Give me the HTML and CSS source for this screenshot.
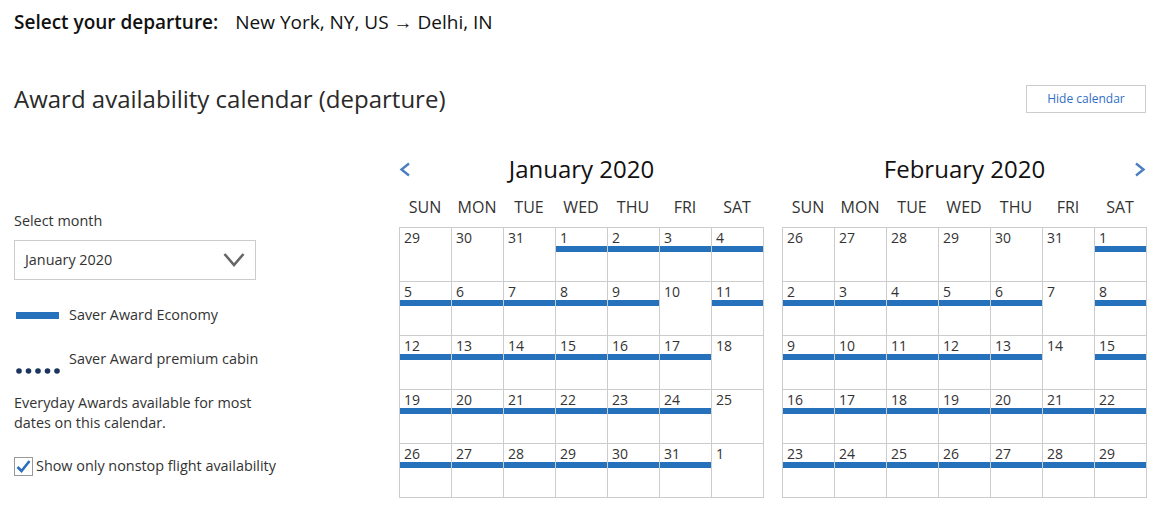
FILE: index.html
```html
<!DOCTYPE html>
<html lang="en">
<head>
<meta charset="utf-8">
<title>Award availability calendar</title>
<link rel="stylesheet" href="styles.css">
</head>
<body>
<div class="page">
  <header class="trip">
    <span class="trip-label">Select your departure:</span>
    <span class="trip-route">New York, NY, US → Delhi, IN</span>
  </header>

  <div class="title-row">
    <h1 class="title">Award availability calendar (departure)</h1>
    <button class="hide-btn" type="button">Hide calendar</button>
  </div>

  <div class="main">
    <aside class="side">
      <div class="side-label">Select month</div>
      <div class="select">
        <span>January 2020</span>
        <svg class="chev" width="22" height="16" viewBox="0 0 22 16"><polyline points="1.5,2 11,13 20.5,2" fill="none" stroke="#666" stroke-width="2.6"/></svg>
      </div>
      <div class="legend-row">
        <span class="legend-bar"></span>
        <span>Saver Award Economy</span>
      </div>
      <div class="legend-row premium">
        <svg class="legend-dots" width="44" height="6" viewBox="0 0 44 6">
          <circle cx="3" cy="3" r="2.8" fill="#1c355e"/>
          <circle cx="12.5" cy="3" r="2.8" fill="#1c355e"/>
          <circle cx="22" cy="3" r="2.8" fill="#1c355e"/>
          <circle cx="31.5" cy="3" r="2.8" fill="#1c355e"/>
          <circle cx="41" cy="3" r="2.8" fill="#1c355e"/>
        </svg>
        <span>Saver Award premium cabin</span>
      </div>
      <p class="note">Everyday Awards available for most dates on this calendar.</p>
      <label class="check-row">
        <span class="checkbox"><svg width="17" height="17" viewBox="0 0 17 17"><polyline points="2.5,9 6.5,13 14.5,3" fill="none" stroke="#2d6fbe" stroke-width="2.6"/></svg></span>
        <span>Show only nonstop flight availability</span>
      </label>
    </aside>

    <div class="calendars">
      <section class="month">
        <div class="month-head">
          <span class="nav nav-prev"><svg width="12" height="15" viewBox="0 0 12 15"><polyline points="10,1.5 2.5,7.5 10,13.5" fill="none" stroke="#4a7fc0" stroke-width="2.4"/></svg></span>
          <h2 class="month-title">January 2020</h2>
          <span></span>
        </div>
        <div class="dow"><span>SUN</span><span>MON</span><span>TUE</span><span>WED</span><span>THU</span><span>FRI</span><span>SAT</span></div>
        <div class="grid">
          <div class="cell"><span class="num">29</span></div>
          <div class="cell"><span class="num">30</span></div>
          <div class="cell"><span class="num">31</span></div>
          <div class="cell saver"><span class="num">1</span></div>
          <div class="cell saver"><span class="num">2</span></div>
          <div class="cell saver"><span class="num">3</span></div>
          <div class="cell saver"><span class="num">4</span></div>

          <div class="cell saver"><span class="num">5</span></div>
          <div class="cell saver"><span class="num">6</span></div>
          <div class="cell saver"><span class="num">7</span></div>
          <div class="cell saver"><span class="num">8</span></div>
          <div class="cell saver"><span class="num">9</span></div>
          <div class="cell"><span class="num">10</span></div>
          <div class="cell saver"><span class="num">11</span></div>

          <div class="cell saver"><span class="num">12</span></div>
          <div class="cell saver"><span class="num">13</span></div>
          <div class="cell saver"><span class="num">14</span></div>
          <div class="cell saver"><span class="num">15</span></div>
          <div class="cell saver"><span class="num">16</span></div>
          <div class="cell saver"><span class="num">17</span></div>
          <div class="cell"><span class="num">18</span></div>

          <div class="cell saver"><span class="num">19</span></div>
          <div class="cell saver"><span class="num">20</span></div>
          <div class="cell saver"><span class="num">21</span></div>
          <div class="cell saver"><span class="num">22</span></div>
          <div class="cell saver"><span class="num">23</span></div>
          <div class="cell saver"><span class="num">24</span></div>
          <div class="cell"><span class="num">25</span></div>

          <div class="cell saver"><span class="num">26</span></div>
          <div class="cell saver"><span class="num">27</span></div>
          <div class="cell saver"><span class="num">28</span></div>
          <div class="cell saver"><span class="num">29</span></div>
          <div class="cell saver"><span class="num">30</span></div>
          <div class="cell saver"><span class="num">31</span></div>
          <div class="cell"><span class="num">1</span></div>
        </div>
      </section>

      <section class="month">
        <div class="month-head">
          <span></span>
          <h2 class="month-title">February 2020</h2>
          <span class="nav nav-next"><svg width="12" height="15" viewBox="0 0 12 15"><polyline points="2,1.5 9.5,7.5 2,13.5" fill="none" stroke="#4a7fc0" stroke-width="2.4"/></svg></span>
        </div>
        <div class="dow"><span>SUN</span><span>MON</span><span>TUE</span><span>WED</span><span>THU</span><span>FRI</span><span>SAT</span></div>
        <div class="grid">
          <div class="cell"><span class="num">26</span></div>
          <div class="cell"><span class="num">27</span></div>
          <div class="cell"><span class="num">28</span></div>
          <div class="cell"><span class="num">29</span></div>
          <div class="cell"><span class="num">30</span></div>
          <div class="cell"><span class="num">31</span></div>
          <div class="cell saver"><span class="num">1</span></div>

          <div class="cell saver"><span class="num">2</span></div>
          <div class="cell saver"><span class="num">3</span></div>
          <div class="cell saver"><span class="num">4</span></div>
          <div class="cell saver"><span class="num">5</span></div>
          <div class="cell saver"><span class="num">6</span></div>
          <div class="cell"><span class="num">7</span></div>
          <div class="cell saver"><span class="num">8</span></div>

          <div class="cell saver"><span class="num">9</span></div>
          <div class="cell saver"><span class="num">10</span></div>
          <div class="cell saver"><span class="num">11</span></div>
          <div class="cell saver"><span class="num">12</span></div>
          <div class="cell saver"><span class="num">13</span></div>
          <div class="cell"><span class="num">14</span></div>
          <div class="cell saver"><span class="num">15</span></div>

          <div class="cell saver"><span class="num">16</span></div>
          <div class="cell saver"><span class="num">17</span></div>
          <div class="cell saver"><span class="num">18</span></div>
          <div class="cell saver"><span class="num">19</span></div>
          <div class="cell saver"><span class="num">20</span></div>
          <div class="cell saver"><span class="num">21</span></div>
          <div class="cell saver"><span class="num">22</span></div>

          <div class="cell saver"><span class="num">23</span></div>
          <div class="cell saver"><span class="num">24</span></div>
          <div class="cell saver"><span class="num">25</span></div>
          <div class="cell saver"><span class="num">26</span></div>
          <div class="cell saver"><span class="num">27</span></div>
          <div class="cell saver"><span class="num">28</span></div>
          <div class="cell saver"><span class="num">29</span></div>
        </div>
      </section>
    </div>
  </div>
</div>
</body>
</html>
```

FILE: styles.css
```css
* { box-sizing: border-box; }

body {
  margin: 0;
  background: #fff;
  color: #333;
  font-family: "Open Sans", "Liberation Sans", Arial, sans-serif;
}

.page {
  padding: 8px 13px 0 14px;
}

/* Trip header */
.trip {
  display: flex;
  align-items: baseline;
  font-size: 19px;
  line-height: 28px;
  color: #111;
}
.trip-label {
  font-weight: 600;
}
.trip-route {
  margin-left: 17px;
}

/* Title row */
.title-row {
  display: flex;
  justify-content: space-between;
  align-items: center;
  height: 32px;
  margin-top: 47px;
}
.title {
  margin: 0;
  font-size: 24px;
  font-weight: 400;
  line-height: 32px;
  color: #2a2a2a;
}
.hide-btn {
  width: 120px;
  height: 28px;
  margin-right: 1px;
  padding: 0;
  background: #fff;
  border: 1px solid #ccc;
  color: #2f6fc6;
  font-family: "Open Sans", "Liberation Sans", Arial, sans-serif;
  font-size: 12px;
  line-height: 16px;
}

/* Main area */
.main {
  display: flex;
  margin-top: 38px;
}

.side {
  width: 270px;
  padding-top: 58px;
  font-size: 14.4px;
  line-height: 20px;
  color: #333;
}
.select {
  width: 242px;
  height: 40px;
  margin-top: 9px;
  padding: 0 10px;
  border: 1px solid #ccc;
  display: flex;
  align-items: center;
  justify-content: space-between;
}
.legend-row {
  display: flex;
  align-items: center;
  margin-top: 25px;
}
.legend-bar {
  width: 43px;
  height: 7px;
  margin: 0 10px 0 2px;
  background: #2571bc;
}
.legend-row.premium {
  align-items: flex-end;
  margin-top: 24px;
}
.legend-dots {
  margin: 0 9px -5px 2px;
  flex: none;
}
.note {
  margin: 24px 0 0;
}
.check-row {
  display: flex;
  align-items: center;
  gap: 3px;
  margin-top: 23px;
  white-space: nowrap;
}
.checkbox {
  width: 19px;
  height: 19px;
  border: 1px solid #999;
  background: #fff;
  display: flex;
}

/* Calendars */
.calendars {
  margin-left: auto;
  display: flex;
  gap: 18px;
}
.month {
  width: 365px;
}
.month-head {
  display: grid;
  grid-template-columns: 1fr auto 1fr;
  align-items: center;
  height: 32px;
  margin-bottom: 11px;
}
.nav {
  display: flex;
}
.nav-prev {
  justify-self: start;
}
.nav-next {
  justify-self: end;
  margin-right: 1px;
}
.month-title {
  margin: 0;
  font-size: 24px;
  font-weight: 400;
  line-height: 32px;
  color: #111;
}
.dow {
  display: grid;
  grid-template-columns: repeat(7, 52px);
  font-size: 16px;
  line-height: 22px;
  text-align: center;
  color: #333;
  margin-bottom: 9px;
}
.grid {
  display: grid;
  grid-template-columns: repeat(7, 52px);
  border-top: 1px solid #ccc;
  border-left: 1px solid #ccc;
}
.cell {
  height: 54px;
  border-right: 1px solid #ccc;
  border-bottom: 1px solid #ccc;
}
.num {
  display: block;
  padding: 1px 0 0 4px;
  font-size: 14px;
  line-height: 17px;
  color: #333;
}
.cell.saver::after {
  content: "";
  display: block;
  height: 6px;
  background: #2571bc;
}
```
